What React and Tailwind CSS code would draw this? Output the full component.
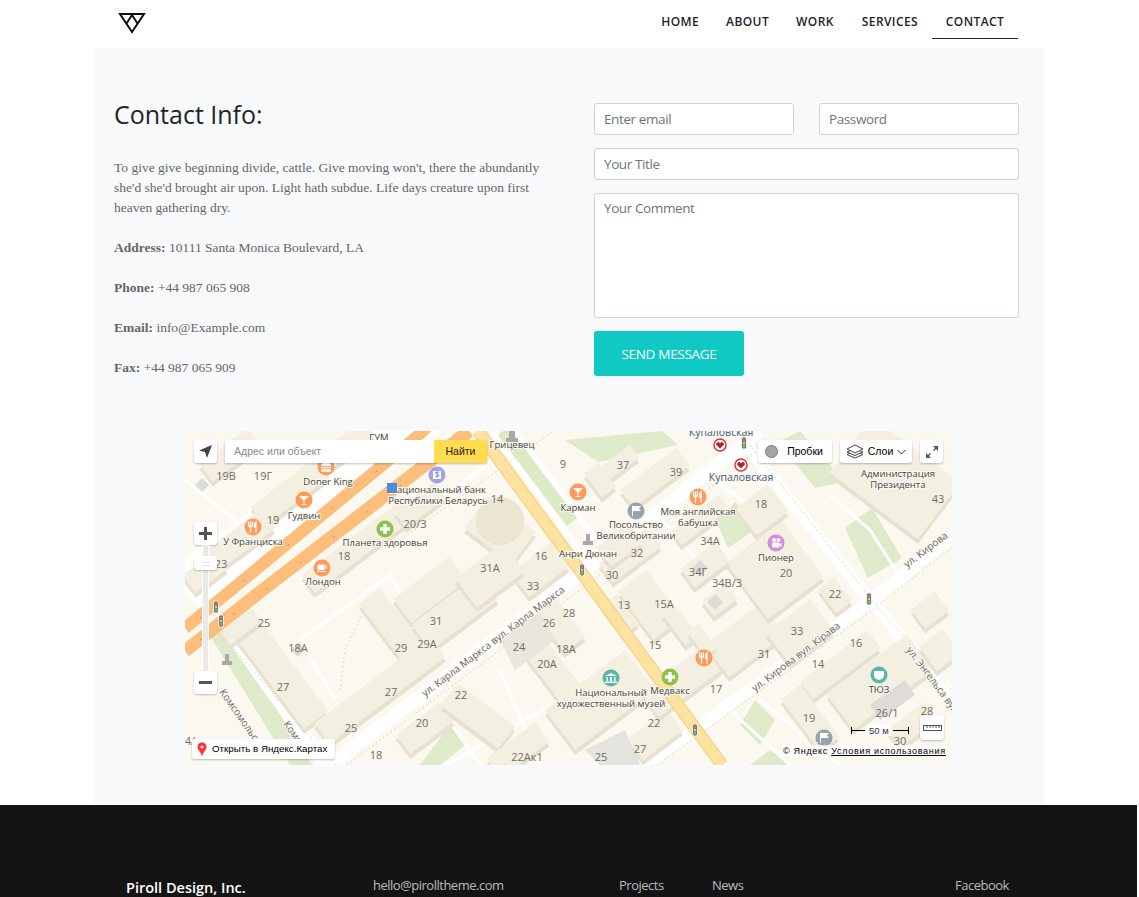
import React from "react";

const sans = "font-['Open_Sans','Noto_Sans',sans-serif]";

function B({ c, w, d, a = -37, h = 5, fill = "#f3efe1", side = "#e6e1d1" }) {
  const rad = (a * Math.PI) / 180;
  const ux = Math.cos(rad), uy = Math.sin(rad), vx = -uy, vy = ux;
  const p = [
    [c[0] - ux * w / 2 - vx * d / 2, c[1] - uy * w / 2 - vy * d / 2],
    [c[0] + ux * w / 2 - vx * d / 2, c[1] + uy * w / 2 - vy * d / 2],
    [c[0] + ux * w / 2 + vx * d / 2, c[1] + uy * w / 2 + vy * d / 2],
    [c[0] - ux * w / 2 + vx * d / 2, c[1] - uy * w / 2 + vy * d / 2],
  ];
  const s = (dy) => p.map((q) => `${q[0].toFixed(1)},${(q[1] + dy).toFixed(1)}`).join(" ");
  return (
    <g>
      <polygon points={s(h)} fill={side} />
      <polygon points={s(0)} fill={fill} />
    </g>
  );
}

const buildings = [
  { c: [230, 455], w: 60, d: 22 }, { c: [290, 492], w: 80, d: 24 }, { c: [240, 540], w: 70, d: 24 },
  { c: [205, 572], w: 40, d: 22 }, { c: [345, 446], w: 60, d: 20 }, { c: [360, 545], w: 130, d: 22 },
  { c: [420, 505], w: 50, d: 20 }, { c: [500, 530], w: 60, d: 40, a: 37 }, { c: [540, 570], w: 50, d: 30 },
  { c: [430, 590], w: 70, d: 30 }, { c: [395, 630], w: 85, d: 26, a: 53 }, { c: [455, 612], w: 85, d: 32 },
  { c: [490, 575], w: 60, d: 36 }, { c: [280, 672], w: 120, d: 30, a: 53 }, { c: [380, 690], w: 145, d: 26 },
  { c: [240, 625], w: 40, d: 20 }, { c: [425, 728], w: 55, d: 24 }, { c: [478, 716], w: 72, d: 28, a: 37 },
  { c: [518, 750], w: 60, d: 24 }, { c: [560, 625], w: 50, d: 26, a: 53 }, { c: [560, 680], w: 80, d: 26, a: 53 },
  { c: [600, 700], w: 100, d: 50 }, { c: [655, 735], w: 50, d: 26 }, { c: [630, 555], w: 60, d: 24 },
  { c: [650, 605], w: 60, d: 36, a: 53 }, { c: [620, 615], w: 36, d: 20, a: 53 }, { c: [690, 675], w: 100, d: 30 },
  { c: [745, 640], w: 40, d: 70, a: 53 }, { c: [680, 625], w: 40, d: 16, a: 53 }, { c: [702, 640], w: 30, d: 14, a: 53 },
  { c: [800, 632], w: 55, d: 40 }, { c: [840, 665], w: 85, d: 22 }, { c: [880, 682], w: 100, d: 44 },
  { c: [810, 718], w: 65, d: 24, a: 53 }, { c: [775, 570], w: 70, d: 70 }, { c: [700, 520], w: 60, d: 18 },
  { c: [762, 510], w: 40, d: 34 }, { c: [655, 478], w: 70, d: 22 }, { c: [620, 462], w: 36, d: 16 },
  { c: [600, 480], w: 30, d: 18, a: 53 }, { c: [895, 478], w: 110, d: 70, a: 37 }, { c: [620, 545], w: 40, d: 24 },
  { c: [835, 595], w: 30, d: 20, a: 53 }, { c: [930, 610], w: 30, d: 24 }, { c: [912, 725], w: 46, d: 22 },
  { c: [940, 650], w: 30, d: 30 }, { c: [705, 565], w: 44, d: 24 }, { c: [720, 600], w: 30, d: 20 },
];

const nums = [
  ["19В", 226, 480], ["19Г", 263, 480], ["19", 273, 524], ["23", 221, 568], ["20/3", 415, 528], ["14", 497, 503],
  ["18", 344, 560], ["16", 541, 560], ["31А", 490, 572], ["33", 533, 590], ["9", 563, 468], ["37", 623, 469],
  ["39", 676, 476], ["18", 761, 508], ["34А", 710, 545], ["32", 637, 557], ["30", 612, 579], ["34Г", 698, 576],
  ["34В/3", 727, 587], ["20", 786, 577], ["22", 835, 598], ["43", 938, 503], ["25", 264, 627], ["18А", 298, 652],
  ["27", 283, 691], ["31", 436, 625], ["29", 401, 652], ["29А", 427, 648], ["26", 549, 627], ["28", 569, 617],
  ["24", 519, 651], ["18А", 566, 653], ["20А", 547, 668], ["22", 461, 699], ["27", 391, 696], ["25", 351, 732],
  ["20", 422, 727], ["18", 376, 759], ["22Ак1", 527, 761], ["13", 624, 609], ["15А", 664, 608], ["15", 655, 649],
  ["31", 764, 658], ["17", 716, 693], ["33", 797, 635], ["16", 856, 647], ["14", 818, 668], ["19", 809, 722],
  ["26/1", 887, 717], ["28", 927, 715], ["30", 900, 745], ["22", 654, 727], ["27", 640, 753], ["25", 601, 761], ["4/", 190, 745],
];

const w = "#fff";
const Fork = () => (
  <g stroke={w} strokeWidth="1.3" fill="none" strokeLinecap="round">
    <path d="M-2.5 -5V5M-4.5 -5V-2Q-4.5 -0.5 -2.5 -0.5Q-0.5 -0.5 -0.5 -2V-5" />
    <path d="M3 5V-5Q1.2 -3 1.5 0H3" fill={w} />
  </g>
);
const Martini = () => (
  <g fill={w}><polygon points="-5,-4 5,-4 0,1" /><rect x="-0.5" y="0" width="1" height="4" /><rect x="-2.5" y="4" width="5" height="1" /></g>
);
const Cup = () => (
  <g fill={w}><rect x="-4.5" y="-3.5" width="7" height="5.5" rx="1" /><path d="M2 -2.5H4.5V0H2" fill="none" stroke={w} /><rect x="-5" y="3" width="9" height="1" /></g>
);
const Burger = () => (
  <g fill={w}><path d="M-5 -1Q-5 -4.5 0 -4.5Q5 -4.5 5 -1Z" /><rect x="-5" y="0" width="10" height="1.2" /><rect x="-5" y="2.2" width="10" height="2.5" rx="1" /></g>
);
const Plus = () => <path d="M-1.7 -5H1.7V-1.7H5V1.7H1.7V5H-1.7V1.7H-5V-1.7H-1.7Z" fill={w} />;
const Flag = () => <g fill={w}><rect x="-4" y="-5" width="1" height="10" /><polygon points="-3,-5 5,-5 3,-2.5 5,0 -3,0" /></g>;
const Bank = () => <g fill={w}><polygon points="0,-5 6,-2 -6,-2" /><path d="M-4.5 -1H-3V3H-4.5ZM-1 -1H1V3H-1ZM3 -1H4.5V3H3ZM-6 3.5H6V5H-6Z" /></g>;
const Mask = () => <path d="M-5 -4H5V0Q5 4 0 5Q-5 4 -5 0Z" fill={w} />;
const Cam = () => <g fill={w}><circle cx="-2" cy="-3" r="2" /><circle cx="2.5" cy="-3" r="2" /><rect x="-4" y="-0.5" width="7" height="5" /><polygon points="3,1 5.5,0 5.5,4 3,3" /></g>;
const Dollar = () => <g><rect x="-4" y="-4" width="8" height="8" fill={w} /><text x="0" y="3" fontSize="8" fontWeight="700" fill="#8e8ee8" textAnchor="middle">$</text></g>;

const poi = [
  ["#ff9a5a", 326, 467, Burger], ["#ff9a5a", 304, 500, Martini], ["#ff9a5a", 253, 527, Fork], ["#ff9a5a", 322, 568, Cup],
  ["#a5a0ec", 437, 475, Dollar], ["#8bc24a", 385, 529, Plus], ["#ff9a5a", 578, 492, Martini], ["#ff9a5a", 698, 497, Fork],
  ["#9aa2ad", 636, 511, Flag], ["#d78be0", 776, 543, Cam], ["#ff9a5a", 704, 658, Fork], ["#8bc24a", 670, 677, Plus],
  ["#5ab8a8", 611, 678, Bank], ["#5ab8a8", 879, 675, Mask], ["#9aa2ad", 824, 738, Flag],
];

const labels = [
  ["ГУМ", 379, 441], ["Doner King", 328, 485], ["Гудвин", 304, 519], ["У Франциска", 253, 545], ["Национальный банк", 438, 493],
  ["Республики Беларусь", 438, 504], ["Планета здоровья", 385, 546], ["Лондон", 323, 585], ["Грицевец", 512, 448], ["Карман", 578, 511],
  ["Посольство", 636, 528], ["Великобритании", 636, 539], ["Анри Дюнан", 588, 557], ["Моя английская", 698, 515], ["бабушка", 698, 526],
  ["Пионер", 776, 561], ["Администрация", 898, 477], ["Президента", 898, 488], ["Национальный", 611, 696], ["художественный музей", 611, 707],
  ["Медвакс", 670, 694], ["ТЮЗ", 879, 693],
];

const lights = [[744, 443], [582, 570], [216, 607], [221, 621], [869, 599], [695, 730]];
const Heart = ({ x, y }) => (
  <g transform={`translate(${x},${y})`}>
    <circle r="6" fill="#fff" stroke="#d0343a" strokeWidth="1.4" />
    <path d="M0 3.5L-4 -0.5Q-4 -3 -2 -3Q-0.6 -3 0 -1.6Q0.6 -3 2 -3Q4 -3 4 -0.5Z" fill="#b3242a" />
  </g>
);

function MapArt() {
  return (
    <svg viewBox="185 431 767 334" className="block w-full h-full" style={{ fontFamily: "'Open Sans', sans-serif" }}>
      <rect x="185" y="431" width="767" height="334" fill="#fbf8ef" />
      <g fill="#dfeaca">
        <polygon points="565,440 662,431 678,445 598,462" />
        <polygon points="718,525 735,502 762,525 728,548" />
        <polygon points="778,442 800,431 845,482 815,488" />
        <polygon points="845,528 872,508 902,558 868,578" />
        <polygon points="210,636 226,628 312,765 290,765" />
        <polygon points="420,765 450,725 465,745 440,765" />
        <polygon points="755,700 775,720 760,745 740,725" />
        <polygon points="770,750 790,765 750,765" />
      </g>
      <g fill="none" stroke="#fff" strokeLinecap="butt">
        <path d="M330 765L570 582L760 431" strokeWidth="13" />
        <path d="M640 770L865 605L960 530" strokeWidth="12" />
        <path d="M735 431L870 600L960 705" strokeWidth="12" />
        <path d="M225 625L325 765" strokeWidth="14" />
        <path d="M185 590L470 380" strokeWidth="50" />
        <path d="M492 431L580 550" strokeWidth="5" />
        <path d="M515 431L600 545" strokeWidth="6" />
        <path d="M300 640L335 700" strokeWidth="3" />
        <path d="M300 640L390 575L410 610" strokeWidth="3" />
        <path d="M770 520L700 470L655 510L730 600L790 555" strokeWidth="3" />
        <path d="M830 495L870 530L905 585" strokeWidth="3" />
        <path d="M560 700L420 780" strokeWidth="3" />
        <path d="M438 705L480 765" strokeWidth="3" />
        <path d="M500 670L530 740L490 760" strokeWidth="3" />
        <path d="M730 710L790 765" strokeWidth="3" />
        <path d="M760 700L840 765" strokeWidth="3" />
        <path d="M345 570L520 440" strokeWidth="4" />
        <path d="M185 480L260 540" strokeWidth="3" />
      </g>
      <path d="M503 431L572 522" stroke="#dcebc5" strokeWidth="13" fill="none" />
      <g fill="none" stroke="#c7d8a5" strokeWidth="1" strokeDasharray="1.5 3">
        <path d="M340 770L580 590L770 440" />
        <path d="M222 635L335 765" />
        <path d="M650 770L870 612L955 545" />
        <path d="M750 445L880 610L952 690" />
        <path d="M340 690L345 650L365 610" />
        <path d="M400 540L590 405" />
      </g>
      {buildings.map((b, i) => <B key={i} {...b} />)}
      <polygon points="500,640 540,612 555,640 515,670" fill="#e8e6dd" />
      <polygon points="585,750 625,730 640,765 600,765" fill="#e4e3dd" />
      <polygon points="870,705 905,680 915,695 880,720" fill="#dddcd6" />
      <polygon points="202,478 209,485 202,492 195,485" fill="#dcdcd6" />
      <polygon points="298,643 305,650 298,657 291,650" fill="#dcdcd6" />
      <polygon points="700,560 708,568 700,576 692,568" fill="#dcdcd6" />
      <polygon points="715,594 723,602 715,610 707,602" fill="#dcdcd6" />
      <path d="M478 431L722 765" stroke="#f3d58f" strokeWidth="13" fill="none" />
      <path d="M478 431L722 765" stroke="#fde39f" strokeWidth="10" fill="none" />
      <g fill="none">
        <path d="M185 628L413 440L440 415" stroke="#fdbe7c" strokeWidth="12" />
        <path d="M185 651L260 592L469 431" stroke="#fdbe7c" strokeWidth="13" />
        <path d="M200 618L400 452" stroke="#b98a55" strokeWidth="1" strokeDasharray="2 55" />
        <path d="M200 640L460 440" stroke="#b98a55" strokeWidth="1" strokeDasharray="2 40" />
      </g>
      <circle cx="500" cy="521" r="24" fill="#ebe5d4" />
      <g fill="#a9a8a2">
        <path d="M509 431H515V438H518V442H506V438H509Z" />
        <path d="M586 534H590V541H593V545H583V541H586Z" />
        <path d="M225 654H229V661H232V665H222V661H225Z" />
      </g>
      <g fontSize="11" fill="#6f6c63" textAnchor="middle">
        {nums.map(([t, x, y], i) => <text key={i} x={x} y={y}>{t}</text>)}
      </g>
      {poi.map(([col, x, y, G], i) => (
        <g key={i}>
          <circle cx={x} cy={y} r="8.5" fill={col} />
          <g transform={`translate(${x},${y})`}><G /></g>
        </g>
      ))}
      <g fontSize="9.5" fill="#444" textAnchor="middle" stroke="#fbf8ef" strokeWidth="2" paintOrder="stroke">
        {labels.map(([t, x, y], i) => <text key={i} x={x} y={y}>{t}</text>)}
        <text x="721" y="436" fill="#405a80" fontSize="10.5">Купаловская</text>
        <text x="741" y="481" fill="#405a80" fontSize="10.5">Купаловская</text>
      </g>
      <Heart x={720} y={445} />
      <Heart x={741} y={465} />
      <rect x="387" y="483" width="10" height="10" fill="#4a90d9" />
      {lights.map(([x, y], i) => (
        <g key={i}>
          <rect x={x - 2.5} y={y - 6} width="5" height="12" rx="2" fill="#777" stroke="#eee" strokeWidth="1" />
          <circle cx={x} cy={y - 3} r="1.2" fill="#e66" />
          <circle cx={x} cy={y} r="1.2" fill="#ec5" />
          <circle cx={x} cy={y + 3} r="1.2" fill="#7c5" />
        </g>
      ))}
      <g fontSize="10" fill="#666" stroke="#fbf8ef" strokeWidth="2" paintOrder="stroke">
        <text transform="translate(425,697) rotate(-37)">ул. Карла Маркса вул. Карла Маркса</text>
        <text transform="translate(755,692) rotate(-37)">ул. Кирова вул. Кірава</text>
        <text transform="translate(907,568) rotate(-37)">ул. Кирова</text>
        <text transform="translate(906,650) rotate(53)">ул. Энгельса вул</text>
        <text transform="translate(219,692) rotate(55)">Комсомольская</text>
        <text transform="translate(283,724) rotate(55)">Комс</text>
      </g>
    </svg>
  );
}

function Ctl({ className, children }) {
  return (
    <div className={`absolute bg-white rounded-[3px] shadow-[0_1px_2px_rgba(0,0,0,0.25)] flex items-center justify-center ${className}`}>
      {children}
    </div>
  );
}

function MapBlock() {
  return (
    <div className="relative w-[767px] h-[334px] ml-[91px] overflow-hidden font-['Liberation_Sans',sans-serif] text-[10.5px] text-black">
      <MapArt />
      <Ctl className="left-[9px] top-[9px] w-[23px] h-[23px]">
        <svg width="15" height="15" viewBox="0 0 15 15"><path d="M14 1L1 6.5L7 8L9 14Z" fill="#444" /></svg>
      </Ctl>
      <div className="absolute left-[40px] top-[9px] w-[262px] h-[23px] flex shadow-[0_1px_2px_rgba(0,0,0,0.25)]">
        <div className="flex-1 bg-white pl-[9px] flex items-center text-[#8a8a8a]">Адрес или объект</div>
        <div className="w-[53px] bg-[#ffdb4d] flex items-center justify-center text-[#222]">Найти</div>
      </div>
      <Ctl className="left-[573px] top-[9px] w-[74px] h-[23px] gap-[9px] pr-[2px]">
        <span className="w-[13px] h-[13px] rounded-full bg-[#a5a5a5] border border-[#777]" />
        <span>Пробки</span>
      </Ctl>
      <Ctl className="left-[655px] top-[9px] w-[72px] h-[23px] gap-[4px]">
        <svg width="18" height="15" viewBox="0 0 18 15" fill="#fff" stroke="#444" strokeWidth="1"><path d="M9 7L17 10.5L9 14L1 10.5Z" /><path d="M9 4.5L17 8L9 11.5L1 8Z" /><path d="M9 1L17 5L9 9L1 5Z" /></svg>
        <span>Слои</span>
        <svg width="9" height="6" viewBox="0 0 9 6" fill="none" stroke="#333"><path d="M0.5 1L4.5 5L8.5 1" /></svg>
      </Ctl>
      <Ctl className="left-[735px] top-[9px] w-[23px] h-[23px]">
        <svg width="14" height="14" viewBox="0 0 14 14" fill="#555"><path d="M8 1H13V6L11 4L9 6L8 5L10 3ZM6 13H1V8L3 10L5 8L6 9L4 11Z" /></svg>
      </Ctl>
      <Ctl className="left-[9px] top-[91px] w-[23px] h-[23px]">
        <svg width="15" height="15" viewBox="0 0 15 15" fill="#555"><path d="M6 1H9V6H14V9H9V14H6V9H1V6H6Z" /></svg>
      </Ctl>
      <div className="absolute left-[17px] top-[114px] w-[7px] h-[127px] bg-[#e9e9e6] border-x border-white" />
      <Ctl className="left-[9px] top-[125px] w-[23px] h-[14px] text-[7px] leading-none text-[#999]">::::</Ctl>
      <Ctl className="left-[9px] top-[240px] w-[23px] h-[23px]">
        <span className="block w-[13px] h-[3px] bg-[#555]" />
      </Ctl>
      <Ctl className="left-[7px] top-[308px] w-[143px] h-[20px] gap-[5px] justify-start pl-[5px] text-[9.75px] whitespace-nowrap">
        <svg width="10" height="15" viewBox="0 0 10 15"><path d="M5 0.5C2.2 0.5 0.5 2.6 0.5 5C0.5 8 4 10 5 14.5C6 10 9.5 8 9.5 5C9.5 2.6 7.8 0.5 5 0.5Z" fill="#f33" /><circle cx="5" cy="5" r="1.6" fill="#fff" /></svg>
        <span>Открыть в Яндекс.Картах</span>
      </Ctl>
      <Ctl className="left-[735px] top-[285px] w-[24px] h-[24px]">
        <svg width="19" height="8" viewBox="0 0 19 8" fill="none" stroke="#555"><rect x="0.5" y="1.5" width="18" height="5" /><path d="M4 1.5V4M7 1.5V4M10 1.5V4M13 1.5V4M16 1.5V4" /></svg>
      </Ctl>
      <div className="absolute left-[666px] top-[294px] w-[62px] h-[11px] flex items-center gap-[2px] text-[9.5px] text-[#333]">
        <span className="w-[14px] h-[7px] border-l border-black flex items-center"><span className="block w-full h-px bg-black" /></span>
        <span className="bg-white px-[2px] leading-[11px]">50 м</span>
        <span className="w-[16px] h-[7px] border-r border-black flex items-center"><span className="block w-full h-px bg-black" /></span>
      </div>
      <div className="absolute left-[598px] top-[314px] h-[12px] flex items-center bg-[#fff]/70 text-[9px] tracking-[0.7px] leading-[12px] text-black whitespace-nowrap">
        <span>© Яндекс&nbsp;</span><span className="underline">Условия использования</span>
      </div>
    </div>
  );
}

function Logo() {
  return (
    <svg width="28" height="22" viewBox="0 0 28 22" fill="none" stroke="#111" strokeWidth="2" aria-label="logo">
      <path d="M2 2H26L14 20Z" />
      <path d="M14 3L8.5 11.5M14 3L19.5 11.5" />
    </svg>
  );
}

const Field = ({ placeholder, className = "" }) => (
  <input
    placeholder={placeholder}
    className={`h-[32px] w-full bg-white border border-[#ced4da] rounded-[3px] px-[9px] text-[13.5px] tracking-[-0.4px] outline-none placeholder:text-[#6c757d] ${sans} ${className}`}
  />
);

const Info = ({ k, v }) => (
  <p className="mt-[20px] leading-[20px]"><b>{k}</b> {v}</p>
);

export default function App() {
  return (
    <div className="w-[1137px] h-[897px] overflow-hidden bg-white">
      <header className="h-[48px] w-[950px] ml-[94px] flex items-center justify-between pl-[24px] pr-[26px]">
        <div className="-mt-[2px]"><Logo /></div>
        <nav className={`flex items-start h-[39px] pt-[13px] self-start text-[12px] tracking-[0.4px] text-[#212529] font-semibold ${sans}`}>
          <a className="mr-[27px]">HOME</a>
          <a className="mr-[27px]">ABOUT</a>
          <a className="mr-[28px]">WORK</a>
          <a className="mr-[14px]">SERVICES</a>
          <a className="h-[26px] w-[86px] text-center border-b border-[#212529]">CONTACT</a>
        </nav>
      </header>
      <main className="w-[950px] h-[757px] ml-[94px] bg-[#f8f9fa] pt-[48px]">
        <div className="flex pl-[20px] pr-[25px]">
          <section className="w-[480px] font-['Liberation_Serif',serif] text-[13.5px] text-[#666]">
            <h1 className={`text-[25px] leading-[36px] font-medium text-[#212529] ${sans}`}>Contact Info:</h1>
            <p className="mt-[26px] leading-[20px] w-[440px]">
              To give give beginning divide, cattle. Give moving won't, there the abundantly she'd she'd brought air upon. Light hath subdue. Life days creature upon first heaven gathering dry.
            </p>
            <Info k="Address:" v="10111 Santa Monica Boulevard, LA" />
            <Info k="Phone:" v="+44 987 065 908" />
            <Info k="Email:" v="info@Example.com" />
            <Info k="Fax:" v="+44 987 065 909" />
          </section>
          <form className="w-[425px] pt-[7px] flex flex-col">
            <div className="flex gap-[25px]">
              <Field placeholder="Enter email" />
              <Field placeholder="Password" />
            </div>
            <Field placeholder="Your Title" className="mt-[13px]" />
            <textarea
              placeholder="Your Comment"
              className={`mt-[13px] h-[125px] w-full resize-none bg-white border border-[#ced4da] rounded-[3px] px-[9px] py-[4px] text-[13.5px] tracking-[-0.4px] outline-none placeholder:text-[#6c757d] ${sans}`}
            />
            <button type="button" className={`mt-[13px] w-[150px] h-[45px] pt-[2px] rounded-[3px] bg-[#10c9c3] text-white text-[13.5px] tracking-[-0.3px] ${sans}`}>SEND MESSAGE</button>
          </form>
        </div>
        <div className="mt-[53px]"><MapBlock /></div>
      </main>
      <footer className={`h-[200px] bg-[#141414] text-[13px] tracking-[-0.5px] text-[#bbb] ${sans}`}>
        <div className="w-[950px] ml-[94px] flex pt-[71px] pl-[32px]">
          <b className="w-[247px] text-white text-[14.5px] tracking-normal font-semibold mt-[1px]">Piroll Design, Inc.</b>
          <span className="w-[246px]">hello@pirolltheme.com</span>
          <span className="w-[93px]">Projects</span>
          <span className="w-[243px]">News</span>
          <span>Facebook</span>
        </div>
      </footer>
    </div>
  );
}
